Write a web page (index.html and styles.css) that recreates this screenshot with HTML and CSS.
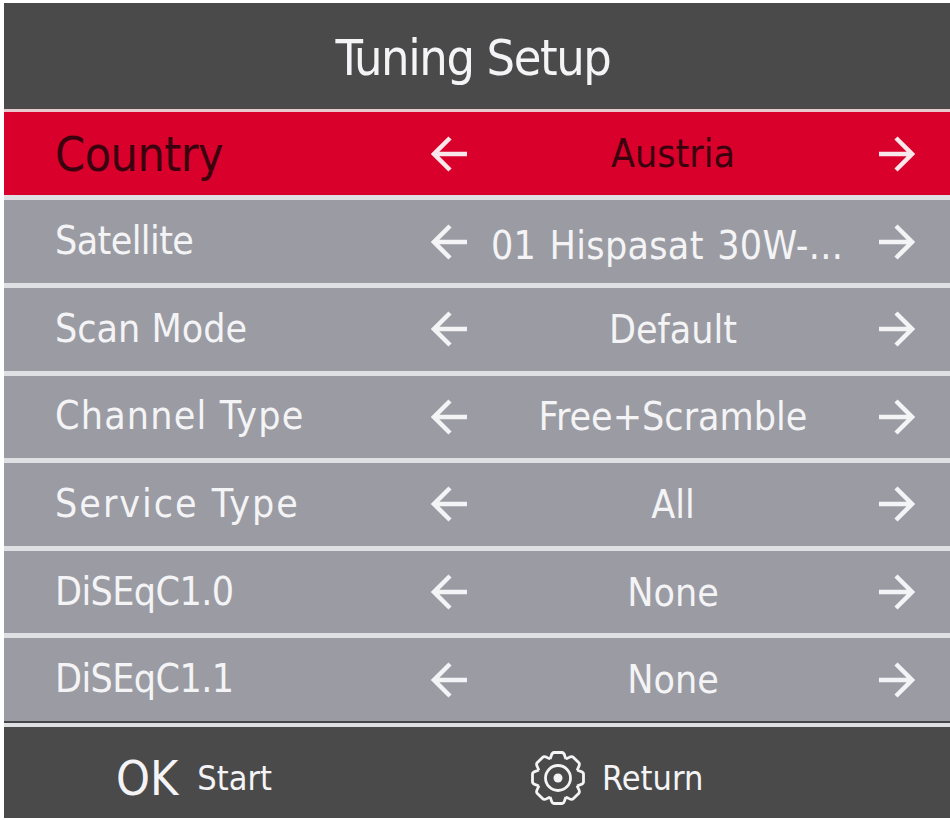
FILE: index.html
```html
<!DOCTYPE html>
<html>
<head>
  <title>Tuning Setup</title>
  <link rel="stylesheet" href="styles.css">
</head>
<body>
  <svg class="defs" width="0" height="0">
    <symbol id="arrow-left" viewBox="0 0 38 38">
      <path d="M36 19H3M19 3L3 19l16 16"/>
    </symbol>
    <symbol id="arrow-right" viewBox="0 0 38 38">
      <path d="M2 19h33M19 3l16 16-16 16"/>
    </symbol>
  </svg>

  <div class="screen">
    <div class="title">Tuning Setup</div>

    <div class="menu">
      <div class="row active">
        <span class="label">Country</span>
        <svg class="arrow"><use href="#arrow-left"/></svg>
        <span class="value">Austria</span>
        <svg class="arrow"><use href="#arrow-right"/></svg>
      </div>
      <div class="row">
        <span class="label tight">Satellite</span>
        <svg class="arrow"><use href="#arrow-left"/></svg>
        <span class="value wide">01 Hispasat 30W-...</span>
        <svg class="arrow"><use href="#arrow-right"/></svg>
      </div>
      <div class="row">
        <span class="label">Scan Mode</span>
        <svg class="arrow"><use href="#arrow-left"/></svg>
        <span class="value">Default</span>
        <svg class="arrow"><use href="#arrow-right"/></svg>
      </div>
      <div class="row">
        <span class="label spaced">Channel Type</span>
        <svg class="arrow"><use href="#arrow-left"/></svg>
        <span class="value">Free+Scramble</span>
        <svg class="arrow"><use href="#arrow-right"/></svg>
      </div>
      <div class="row">
        <span class="label spaced-more">Service Type</span>
        <svg class="arrow"><use href="#arrow-left"/></svg>
        <span class="value">All</span>
        <svg class="arrow"><use href="#arrow-right"/></svg>
      </div>
      <div class="row">
        <span class="label tight">DiSEqC1.0</span>
        <svg class="arrow"><use href="#arrow-left"/></svg>
        <span class="value">None</span>
        <svg class="arrow"><use href="#arrow-right"/></svg>
      </div>
      <div class="row">
        <span class="label tight">DiSEqC1.1</span>
        <svg class="arrow"><use href="#arrow-left"/></svg>
        <span class="value">None</span>
        <svg class="arrow"><use href="#arrow-right"/></svg>
      </div>
    </div>

    <div class="footer">
      <div class="hint hint-ok">
        <span class="key">OK</span>
        <span class="hint-text">Start</span>
      </div>
      <div class="hint hint-return">
        <svg class="gear" viewBox="-28 -28 56 56">
          <path d="M-8 -19.3C-6.5 -21 -7 -25.5 -4 -25.5H4C7 -25.5 6.5 -21 8 -19.3"/>
          <path transform="rotate(45)" d="M-8 -19.3C-6.5 -21 -7 -25.5 -4 -25.5H4C7 -25.5 6.5 -21 8 -19.3"/>
          <path transform="rotate(90)" d="M-8 -19.3C-6.5 -21 -7 -25.5 -4 -25.5H4C7 -25.5 6.5 -21 8 -19.3"/>
          <path transform="rotate(135)" d="M-8 -19.3C-6.5 -21 -7 -25.5 -4 -25.5H4C7 -25.5 6.5 -21 8 -19.3"/>
          <path transform="rotate(180)" d="M-8 -19.3C-6.5 -21 -7 -25.5 -4 -25.5H4C7 -25.5 6.5 -21 8 -19.3"/>
          <path transform="rotate(225)" d="M-8 -19.3C-6.5 -21 -7 -25.5 -4 -25.5H4C7 -25.5 6.5 -21 8 -19.3"/>
          <path transform="rotate(270)" d="M-8 -19.3C-6.5 -21 -7 -25.5 -4 -25.5H4C7 -25.5 6.5 -21 8 -19.3"/>
          <path transform="rotate(315)" d="M-8 -19.3C-6.5 -21 -7 -25.5 -4 -25.5H4C7 -25.5 6.5 -21 8 -19.3"/>
          <circle r="12.5"/>
          <circle class="gear-dot" r="4.5"/>
        </svg>
        <span class="hint-text">Return</span>
      </div>
    </div>
  </div>
</body>
</html>
```

FILE: styles.css
```css
body {
  margin: 0;
  padding: 3px 0 0 4px;
  background-color: #fff;
  font-family: "DejaVu Sans Condensed", "DejaVu Sans", sans-serif;
  font-stretch: condensed;
  color: #f4f4f6;
}
.defs {
  position: absolute;
}
symbol path {
  fill: none;
  stroke: currentColor;
  stroke-width: 4.5;
}
.screen {
  width: 946px;
  background-color: #dfe0e3;
}
.title {
  height: 106px;
  line-height: 110px;
  text-align: center;
  font-size: 50px;
  letter-spacing: -1.4px;
  background-color: #4a4a4b;
  padding-right: 8px;
  border-bottom: 3px solid #e8c9cd;
}
.menu {
  display: flex;
  flex-direction: column;
  gap: 5px;
  border-bottom: 2px solid #45454a;
}
.row {
  height: 82.6px;
  display: grid;
  grid-template-columns: 376px 38px 1fr 38px;
  align-items: center;
  padding: 0 35px 0 51px;
  background-color: #9b9ca3;
  font-size: 39px;
}
.row.active {
  height: 83.4px;
  background-color: #d9002c;
  color: #3a000e;
}
.row.active .label {
  margin-top: 0;
  font-size: 48px;
  letter-spacing: -0.5px;
}
.row.active .arrow {
  color: #f8e8ec;
}
.label {
  margin-top: -2px;
}
.label.tight {
  letter-spacing: -0.6px;
}
.label.spaced {
  letter-spacing: 1.2px;
}
.label.spaced-more {
  letter-spacing: 2px;
}
.value {
  text-align: center;
  white-space: nowrap;
}
.value.wide {
  margin: 8px 12px 0 0;
  word-spacing: 2px;
  letter-spacing: 0.3px;
}
.arrow {
  width: 38px;
  height: 38px;
  color: #f4f4f6;
}
.footer {
  height: 79px;
  padding-top: 12px;
  display: flex;
  align-items: center;
  background-color: #4a4a4a;
  border-top: 4px solid #dfe0e3;
}
.hint {
  display: flex;
  align-items: center;
}
.hint-ok {
  width: 414px;
  padding-left: 112px;
  gap: 19px;
}
.hint-return {
  gap: 16px;
}
.key {
  font-size: 48px;
}
.hint-text {
  font-size: 34px;
}
.gear {
  width: 56px;
  height: 56px;
}
.gear path,
.gear circle {
  fill: none;
  stroke: #f4f4f6;
  stroke-width: 2.8;
}
.gear .gear-dot {
  fill: #f4f4f6;
  stroke: none;
}
```
